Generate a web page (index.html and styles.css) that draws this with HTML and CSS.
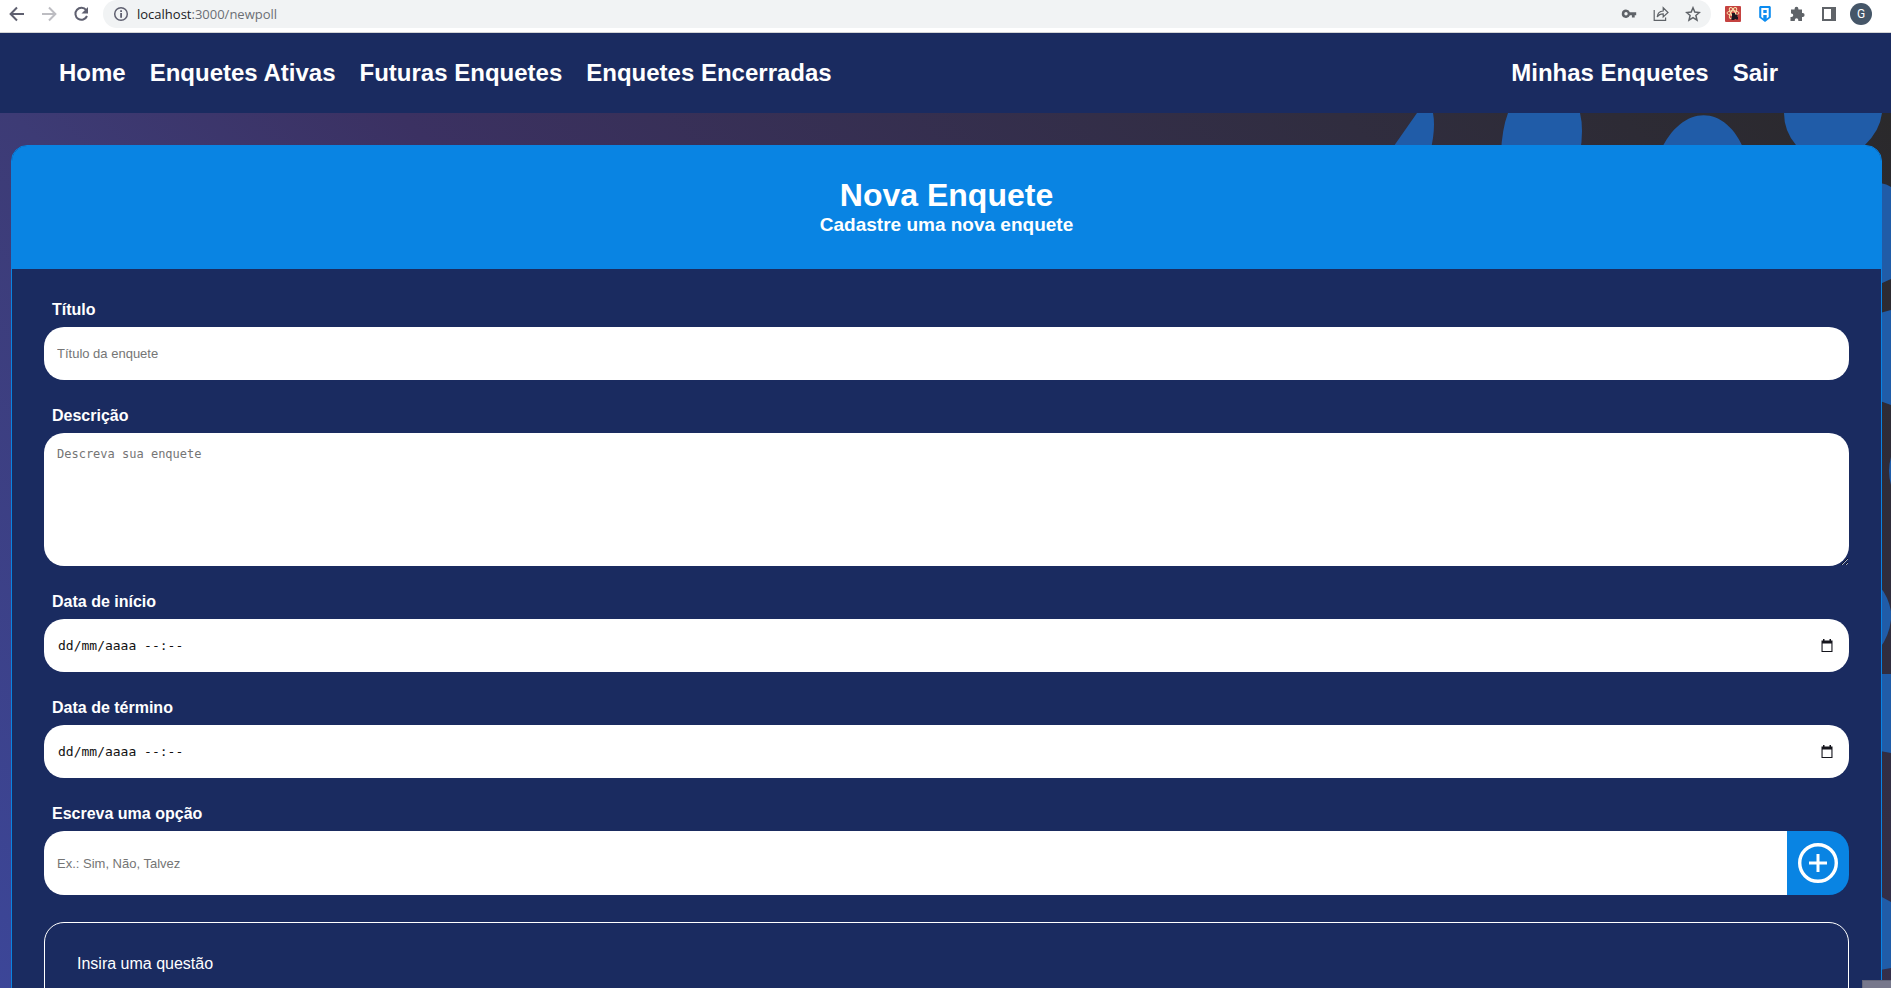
FILE: index.html
```html
<!DOCTYPE html>
<html lang="pt-BR">
<head>
<meta charset="utf-8">
<meta name="viewport" content="width=device-width, initial-scale=1">
<title>Nova Enquete</title>
<link rel="stylesheet" href="styles.css">
</head>
<body>
<div class="window">
  <div class="toolbar">
    <div class="toolbar-group">
      <button class="tool" type="button" aria-label="Voltar"><svg viewBox="0 0 16 16"><path d="M15 8H2M8 1.5 1.6 8 8 14.5" fill="none" stroke="#5f6070" stroke-width="2"/></svg></button>
      <button class="tool" type="button" aria-label="Avançar"><svg viewBox="0 0 16 16"><path d="M1 8h13M8 1.5 14.4 8 8 14.5" fill="none" stroke="#bdbdc2" stroke-width="2"/></svg></button>
      <button class="tool" type="button" aria-label="Recarregar"><svg viewBox="0 0 16 16"><path d="M13.2 4.1A6 6 0 1 0 14 10" fill="none" stroke="#5f6070" stroke-width="2"/><path d="M15 1v6.5H8.5z" fill="#5f6070"/></svg></button>
    </div>
    <div class="address">
      <svg class="icon" viewBox="0 0 16 16"><circle cx="8" cy="8" r="6.3" fill="none" stroke="#5f6070" stroke-width="1.5"/><path d="M7.2 7h1.8v4.700H7.200zM7.200 4.200h1.800V6H7.200z" fill="#5f6070"/></svg>
      <span class="url"><span class="url-host">localhost</span>:3000/newpoll</span>
      <div class="toolbar-group">
        <button class="tool" type="button" aria-label="Senhas"><svg viewBox="0 0 16 16"><path fill="#5f6368" fill-rule="evenodd" d="M5 3.5a4.2 4.2 0 0 1 3.9 2.8h6.3v2.9h-1.5v2.2h-2.8V9.2h-2A4.2 4.2 0 1 1 5 3.500zM5 6a1.7 1.700 0 1 0 0 3.400A1.700 1.700 0 0 0 5 6z"/></svg></button>
        <button class="tool" type="button" aria-label="Compartilhar"><svg viewBox="0 0 16 16" fill="none" stroke="#5f6368" stroke-width="1.2"><path d="M1.200 4v10.400h11.400V11.500"/><path d="M4.200 11c.3-3.600 2.300-5.800 6-6V1.800L15 6.500l-4.800 4.400V7.800c-2.600 0-4.600.9-6 3.200z"/></svg></button>
        <button class="tool" type="button" aria-label="Favoritar"><svg viewBox="0 0 16 16"><path d="m8 1.800 1.800 4.300 4.600.4-3.500 3 1.100 4.600L8 11.700l-4 2.400 1.100-4.600-3.500-3 4.600-.4z" fill="none" stroke="#5f6368" stroke-width="1.500"/></svg></button>
      </div>
    </div>
    <div class="toolbar-group">
      <button class="tool" type="button" aria-label="Extensão React"><svg viewBox="0 0 16 16"><rect width="16" height="16" rx="1" fill="#c54240"/><g fill="none" stroke="#fbe6ac" stroke-width="1"><ellipse cx="8" cy="7" rx="6" ry="2.200"/><ellipse cx="8" cy="7" rx="6" ry="2.200" transform="rotate(60 8 7)"/><ellipse cx="8" cy="7" rx="6" ry="2.200" transform="rotate(120 8 7)"/></g><path fill="#1c1620" d="M7 7h3v1.500h2.500v2.500H13v2.500h-2V13H9.500v1H6.500v-3H7z"/></svg></button>
      <button class="tool" type="button" aria-label="Extensão de senhas"><svg viewBox="0 0 16 16"><path fill="#0c8cf0" d="M3.200 0h9.600l1 1v10.500L8 16l-5.800-4.500V1z"/><path fill="#fff" fill-rule="evenodd" d="M4.300 2h7.400v9l-2 1.500V9H6.300v3.500l-2-1.500zM6.300 4v3h3.400V4z"/></svg></button>
      <button class="tool" type="button" aria-label="Extensões"><svg viewBox="0 0 16 16"><path fill="#5f6368" d="M2 3.500h3.600V2.700a1.900 1.900 0 0 1 3.800 0v.8H13v3.600h.7a1.900 1.900 0 0 1 0 3.800H13V15H9.300v-1a1.700 1.700 0 0 0-3.500 0v1H1.500v-4h1a1.700 1.700 0 0 0 0-3.500H2z"/></svg></button>
      <button class="tool" type="button" aria-label="Painel lateral"><svg viewBox="0 0 16 16"><path fill="#5f6368" fill-rule="evenodd" d="M1 1h14v14H1zM3 3v10h7V3z"/></svg></button>
      <button class="avatar" type="button">G</button>
    </div>
  </div>

  <header class="navbar">
    <nav class="nav-links">
      <a href="#">Home</a>
      <a href="#">Enquetes Ativas</a>
      <a href="#">Futuras Enquetes</a>
      <a href="#">Enquetes Encerradas</a>
    </nav>
    <nav class="nav-links">
      <a href="#">Minhas Enquetes</a>
      <a href="#">Sair</a>
    </nav>
  </header>

  <div class="viewport">
    <svg class="blobs" viewBox="1360 113 531 875" aria-hidden="true">
      <path d="M1417 113h16q3 16-3 40h-41zM1508 113h72q4 16 0 40h-79q1-24 7-40zM1784 113h98q-2 18-18 33l-30 14q-30-5-38-15-12-14-12-32z"/>
      <path d="M1660 152C1682 103 1726 103 1745 152zM1880 183q7 1 11 4v92l-11 5zM1880 313l11-3v95l-11-4zM1891 457q-4 14 0 28zM1880 587q8 9 11 24v9q-2 16-11 28zM1880 674h11v79l-11-2zM1880 896l11 6v66l-11 2z"/>
    </svg>
    <main class="card">
      <div class="card-header">
        <h1>Nova Enquete</h1>
        <h2>Cadastre uma nova enquete</h2>
      </div>
      <form class="form">
        <div class="field">
          <label for="title">Título</label>
          <input class="control" id="title" type="text" placeholder="Título da enquete">
        </div>
        <div class="field">
          <label for="description">Descrição</label>
          <textarea class="control control-area" id="description" placeholder="Descreva sua enquete"></textarea>
        </div>
        <div class="field">
          <label for="start">Data de início</label>
          <div class="control control-date">
            <input id="start" type="text" placeholder="dd/mm/aaaa --:--">
            <button type="button" aria-label="Abrir calendário"><svg viewBox="0 0 12 14"><path fill="#15151c" fill-rule="evenodd" d="M2 0h1.500v1.500h5V0H10v1.500h1.500V13H.5V1.500H2zM1.600 4.600v7.300h8.800V4.600z"/></svg></button>
          </div>
        </div>
        <div class="field">
          <label for="end">Data de término</label>
          <div class="control control-date">
            <input id="end" type="text" placeholder="dd/mm/aaaa --:--">
            <button type="button" aria-label="Abrir calendário"><svg viewBox="0 0 12 14"><path fill="#15151c" fill-rule="evenodd" d="M2 0h1.500v1.500h5V0H10v1.500h1.500V13H.5V1.500H2zM1.600 4.600v7.300h8.800V4.600z"/></svg></button>
          </div>
        </div>
        <div class="field">
          <label for="option">Escreva uma opção</label>
          <div class="option">
            <input class="control" id="option" type="text" placeholder="Ex.: Sim, Não, Talvez">
            <button class="add" type="button" aria-label="Adicionar opção"><svg viewBox="0 0 40 40" fill="none" stroke="#fff"><circle cx="20" cy="20" r="18.300" stroke-width="3.400"/><path d="M20 11v18M11 20h18" stroke-width="3"/></svg></button>
          </div>
        </div>
        <div class="questions">Insira uma questão</div>
      </form>
    </main>
  </div>
  <div class="corner"></div>
</div>
</body>
</html>
```

FILE: styles.css
```css
* {
  box-sizing: border-box;
  margin: 0;
  padding: 0;
}

body {
  font-family: "Liberation Sans", Arial, sans-serif;
  font-size: 16px;
  line-height: 18px;
  color: #fff;
}

button {
  border: 0;
  background: none;
  cursor: pointer;
}

svg {
  display: block;
}

.window {
  position: relative;
  display: flex;
  flex-direction: column;
  height: 100vh;
  overflow: hidden;
}

/* Browser toolbar */
.toolbar {
  display: flex;
  flex: none;
  align-items: center;
  gap: 14px;
  height: 33px;
  padding: 0 19px 4px 9px;
  border-bottom: 1px solid #d3d4d6;
  background: #fff;
}

.toolbar-group {
  display: flex;
  align-items: center;
  gap: 16px;
}

.tool,
.icon {
  flex: none;
  width: 16px;
  height: 16px;
}

.address {
  display: flex;
  flex: 1;
  align-items: center;
  gap: 8px;
  height: 28px;
  padding: 0 10px;
  border-radius: 14px;
  background: #f1f3f4;
}

.url {
  flex: 1;
  font: 13px/18px "Open Sans", "Noto Sans", sans-serif;
  color: #6b6f74;
}

.url-host {
  color: #202124;
}

.avatar {
  width: 22px;
  height: 22px;
  margin-left: -3px;
  border-radius: 50%;
  background: #455668;
  color: #fff;
  font: 12px/22px Roboto, sans-serif;
}

/* Site navigation */
.navbar {
  display: flex;
  flex: none;
  align-items: center;
  justify-content: space-between;
  height: 80px;
  padding: 0 113px 0 59px;
  background: #1a2b60;
}

.nav-links {
  display: flex;
  gap: 24px;
}

.nav-links a {
  color: #fff;
  font-size: 24px;
  font-weight: 700;
  line-height: 28px;
  text-decoration: none;
}

/* Page */
.viewport {
  position: relative;
  flex: 1;
  min-height: 0;
  padding: 32px 9px 32px 11px;
  overflow-y: auto;
  scrollbar-width: none;
  background: linear-gradient(45deg, #3c4698 0%, #3d3b75 32%, #3b3162 46%, #302d3f 80%, #2a292b 100%);
}

.blobs {
  position: absolute;
  top: 0;
  right: 0;
  width: 531px;
  height: 875px;
  fill: #205ca8;
}

.card {
  position: relative;
  border: 1px solid #0984e3;
  border-radius: 16px;
  background: #1a2b60;
  overflow: hidden;
}

.card-header {
  padding: 31px 32px 33px;
  background: #0984e3;
  text-align: center;
}

.card-header h1 {
  font-size: 32px;
  line-height: 37px;
}

.card-header h2 {
  font-size: 19px;
  line-height: 22px;
}

.form {
  display: flex;
  flex-direction: column;
  gap: 27px;
  padding: 32px;
}

.field {
  display: flex;
  flex-direction: column;
  gap: 8px;
}

.field label {
  padding: 0 8px;
  font-weight: 700;
}

.control {
  width: 100%;
  height: 53px;
  padding: 0 13px;
  border: 0;
  border-radius: 20px;
  outline: 0;
  background: #fff;
  color: #111;
  font: 13px/16px "Liberation Sans", Arial, sans-serif;
}

.control::placeholder {
  color: #757575;
}

.control-area {
  display: block;
  height: 133px;
  padding: 13px;
  font: 12px/16px "DejaVu Sans Mono", monospace;
}

.control-date {
  display: flex;
  align-items: center;
  padding: 0 16px 0 14px;
}

.control-date input {
  flex: 1;
  border: 0;
  outline: 0;
  background: none;
  font: 13px/16px "DejaVu Sans Mono", monospace;
}

.control-date input::placeholder {
  color: #111;
}

.control-date button {
  width: 12px;
  height: 14px;
}

.option {
  display: flex;
  height: 64px;
  border-radius: 20px;
  overflow: hidden;
}

.option .control {
  flex: 1;
  height: 100%;
  border-radius: 0;
}

.add {
  display: grid;
  flex: none;
  place-items: center;
  width: 62px;
  background: #0984e3;
}

.add svg {
  width: 40px;
  height: 40px;
}

.questions {
  min-height: 160px;
  padding: 32px;
  border: 1px solid #fff;
  border-radius: 20px;
}

.corner {
  position: absolute;
  right: 0;
  bottom: 0;
  width: 29px;
  height: 8px;
  border: solid #65677a;
  border-width: 1px 0 0 1px;
  background: #77788c;
}
```
